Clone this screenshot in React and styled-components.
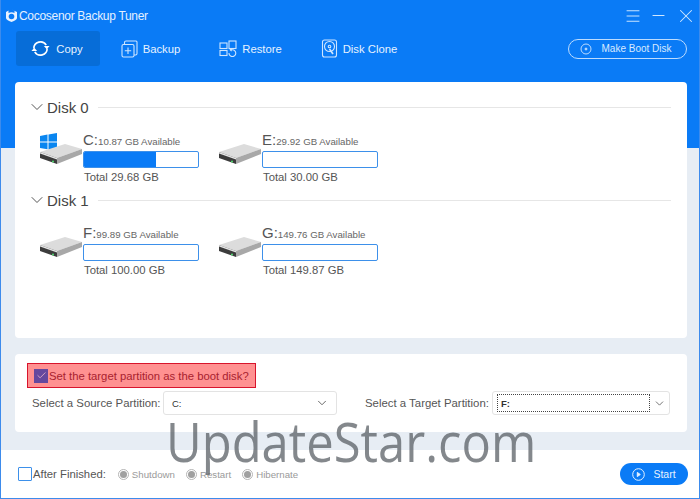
import React from "react";
import styled, { createGlobalStyle } from "styled-components";
import { ChevronDown, Menu, Minus, X, Check } from "lucide-react";

const Global = createGlobalStyle`
  html, body { margin: 0; padding: 0; background: #fff; }
  body { font-family: "Liberation Sans", Arial, sans-serif; }
`;

const Win = styled.div`
  position: relative;
  width: 700px;
  height: 499px;
  box-sizing: border-box;
  border: 1px solid #3d8bec;
  border-top: none;
  display: flex;
  flex-direction: column;
  overflow: hidden;
`;

const Header = styled.div`
  height: 70px;
  background: #0a7bf6;
  flex: none;
  display: flex;
  flex-direction: column;
`;

const TitleBar = styled.div`
  height: 31px;
  display: flex;
  align-items: center;
  padding: 0 2px 0 4px;
  font-size: 12px;
  letter-spacing: -0.3px;
  color: #e4f0ff;
  gap: 1px;
`;

const Title = styled.span`
  flex: 1;
`;

const WinBtns = styled.div`
  display: flex;
  align-items: center;
  gap: 7px;
  color: #cfe7ff;
`;

const Nav = styled.div`
  height: 35px;
  display: flex;
  align-items: center;
  padding: 0 12px 0 15px;
`;

const Tab = styled.div`
  height: 35px;
  width: ${(p) => p.$w}px;
  box-sizing: border-box;
  padding-right: 3px;
  display: flex;
  align-items: center;
  justify-content: center;
  gap: 5px;
  font-size: 11.3px;
  border-radius: 3px;
  background: ${(p) => (p.$active ? "#076dd8" : "transparent")};
  color: #e6f2ff;
`;

const BootBtn = styled.div`
  margin-left: auto;
  width: 119px;
  height: 20px;
  box-sizing: border-box;
  border: 1px solid #bcdcff;
  border-radius: 11px;
  padding-right: 3px;
  display: flex;
  align-items: center;
  justify-content: center;
  gap: 9px;
  font-size: 10px;
  color: #d8eaff;
`;

const Body = styled.div`
  flex: 1;
  background: linear-gradient(#0a7bf6 0 78px, #e7edf4 78px);
  padding: 12px 12px 17px 14px;
  display: flex;
  flex-direction: column;
  gap: 16px;
`;

const DiskPanel = styled.div`
  height: 256px;
  box-sizing: border-box;
  background: #fff;
  border-radius: 4px;
  padding: 15px 16px 0 16px;
`;

const DiskHead = styled.div`
  display: flex;
  align-items: center;
  height: 20px;
  margin-left: -4px;
  font-size: 15px;
  color: #444;
  margin-bottom: 15px;
`;

const Line = styled.div`
  flex: 1;
  height: 1px;
  background: #e6e6e6;
  margin-left: 9px;
`;

const DriveRow = styled.div`
  display: flex;
  gap: 19px;
  margin-bottom: 6px;
  padding-left: 8px;
`;

const Drive = styled.div`
  display: flex;
  width: 160px;
  align-items: flex-end;
`;

const DriveIcon = styled.div`
  position: relative;
  width: 44px;
  height: 32px;
  flex: none;
  margin-bottom: 19px;
`;

const WinLogo = styled.svg`
  position: absolute;
  left: 1px;
  top: 0;
`;

const DriveInfo = styled.div`
  width: 116px;
`;

const Label = styled.div`
  height: 15px;
  line-height: 15px;
  font-size: 9.7px;
  color: #666;
  white-space: nowrap;
  b {
    font-weight: normal;
    font-size: 15px;
    color: #555;
  }
`;

const Bar = styled.div`
  height: 17px;
  box-sizing: border-box;
  border: 1px solid #3d90ea;
  border-radius: 2px;
  margin: 4px 0 3px;
  overflow: hidden;
`;

const Fill = styled.div`
  height: 100%;
  background: #0a7bf6;
`;

const Total = styled.div`
  font-size: 11.3px;
  line-height: 13px;
  color: #555;
  padding-left: 1px;
`;

const BootPanel = styled.div`
  height: 78px;
  box-sizing: border-box;
  background: #fff;
  border-radius: 4px;
  padding: 9px 12px 0 12px;
`;

const Warn = styled.div`
  width: 229px;
  height: 25px;
  box-sizing: border-box;
  background: #ff9191;
  border: 1px solid #d8142c;
  display: flex;
  align-items: center;
  padding-left: 6px;
  gap: 1px;
  font-size: 11.3px;
  color: #a8222f;
  white-space: nowrap;
`;

const Tick = styled.div`
  width: 14px;
  height: 14px;
  flex: none;
  background: #65489e;
  display: flex;
  align-items: center;
  justify-content: center;
  color: #ffc6d0;
`;

const Selects = styled.div`
  display: flex;
  align-items: center;
  margin-top: 3px;
`;

const SelectLabel = styled.div`
  font-size: 11.4px;
  color: #555;
  padding-left: ${(p) => p.$pad}px;
  width: ${(p) => p.$w}px;
  box-sizing: border-box;
  white-space: nowrap;
`;

const Select = styled.div`
  width: ${(p) => p.$w}px;
  height: 24px;
  box-sizing: border-box;
  border: 1px solid #e3e3e3;
  border-radius: 3px;
  display: flex;
  align-items: center;
  font-size: 9.5px;
  color: #333;
  padding: ${(p) => (p.$focus ? "2px 0 2px 4px" : "0 7px 0 8px")};
  justify-content: space-between;
`;

const Focus = styled.div`
  flex: 1;
  height: 100%;
  box-sizing: border-box;
  border: 1px dotted #444;
  display: flex;
  align-items: center;
  padding-left: 3px;
  font-weight: bold;
`;

const ChevWrap = styled.div`
  display: flex;
  align-items: center;
  color: #555;
  padding: ${(p) => (p.$focus ? "0 3px" : "0")};
`;

const Footer = styled.div`
  height: 48px;
  flex: none;
  display: flex;
  align-items: center;
  padding: 0 11px 0 17px;
  font-size: 11.3px;
  color: #555;
`;

const Box = styled.div`
  width: 14px;
  height: 14px;
  box-sizing: border-box;
  border: 1px solid #3d90ea;
  border-radius: 1px;
  margin-right: 1px;
`;

const Radio = styled.div`
  width: 11px;
  height: 11px;
  box-sizing: border-box;
  border: 1px solid #b5b5b5;
  border-radius: 50%;
  background: #fff;
  margin-right: 3px;
  display: flex;
  align-items: center;
  justify-content: center;
  &::after {
    content: "";
    width: 7px;
    height: 7px;
    border-radius: 50%;
    background: #a0a0a0;
  }
`;

const RadioText = styled.span`
  font-size: 9.7px;
  color: #9a9a9a;
  margin-right: 11px;
`;

const FinishLabel = styled.span`
  margin-right: 12px;
`;

const StartBtn = styled.div`
  margin-left: auto;
  width: 68px;
  height: 22px;
  border-radius: 11px;
  background: #0a7bf6;
  color: #e6f2ff;
  display: flex;
  align-items: center;
  justify-content: center;
  gap: 8px;
  font-size: 10.5px;
`;

const Watermark = styled.div`
  position: absolute;
  left: 165px;
  top: 406px;
  font-family: "Open Sans", sans-serif;
  font-size: 55px;
  line-height: 70px;
  color: rgba(85, 90, 95, 0.72);
  white-space: nowrap;
  transform: scaleX(0.89);
  transform-origin: left top;
`;

const HddIcon = () => (
  <svg width="44" height="22" viewBox="0 0 44 22" style={{ position: "absolute", left: 0, bottom: 0 }}>
    <polygon points="1,9 26,1 43,6 18,15" fill="#dcdcdc" />
    <polygon points="18,15 43,6 43,11 18,21" fill="#a8a8a8" />
    <polygon points="1,9 18,15 18,21 1,15" fill="#3c3c3c" />
    <polygon points="1,9 18,15 18,16.4 1,10.4" fill="#e6e6e6" />
    <circle cx="14" cy="18.4" r="1" fill="#4fdc70" />
  </svg>
);

const Drv = ({ letter, avail, total, pct, sys }) => (
  <Drive>
    <DriveIcon>
      {sys && (
        <WinLogo width="17" height="18" viewBox="0 0 17 18">
          <polygon points="0,3 7.5,1.6 7.5,8.4 0,8.4" fill="#0a86f0" />
          <polygon points="8.5,1.4 17,0 17,8.4 8.5,8.4" fill="#0a86f0" />
          <polygon points="0,9.4 7.5,9.4 7.5,16.2 0,15" fill="#0a86f0" />
          <polygon points="8.5,9.4 17,9.4 17,18 8.5,16.4" fill="#0a86f0" />
        </WinLogo>
      )}
      <HddIcon />
    </DriveIcon>
    <DriveInfo>
      <Label>
        <b>{letter}:</b>
        {avail} GB Available
      </Label>
      <Bar>{pct > 0 && <Fill style={{ width: `${pct}%` }} />}</Bar>
      <Total>Total {total} GB</Total>
    </DriveInfo>
  </Drive>
);

const Disk = ({ name, children }) => (
  <>
    <DiskHead>
      <ChevronDown size={20} strokeWidth={1.2} color="#555" />
      {name}
      <Line />
    </DiskHead>
    <DriveRow>{children}</DriveRow>
  </>
);

export default function App() {
  return (
    <Win>
      <Global />
      <Header>
        <TitleBar>
          <svg width="13" height="13" viewBox="0 0 13 13">
            <path d="M6.5 0.5 L12 3 V9 Q12 11 6.5 13 Q1 11 1 9 V3 L3.5 1.6 V4 Q6.5 2.4 9.5 4 V1.8 Z" fill="#e8f2ff" />
            <circle cx="6.5" cy="7.5" r="2.8" fill="#0a7bf6" />
          </svg>
          <Title>Cocosenor Backup Tuner</Title>
          <WinBtns>
            <Menu size={18} strokeWidth={1.3} />
            <Minus size={19} strokeWidth={1.3} />
            <X size={22} strokeWidth={1.1} />
          </WinBtns>
        </TitleBar>
        <Nav>
          <Tab $active $w={84}>
            <svg width="21" height="21" viewBox="0 0 22 22" fill="none" stroke="#fff" strokeWidth="1.7">
              <path d="M4 11a7 7 0 0 1 13-3.5" />
              <path d="M18 11a7 7 0 0 1-13 3.5" />
              <path d="M14.5 8.5h6l-3 3.2z" fill="#fff" stroke="none" />
              <path d="M1.5 13.5h6l-3-3.2z" fill="#fff" stroke="none" />
            </svg>
            Copy
          </Tab>
          <Tab $w={104}>
            <svg width="17" height="18" viewBox="0 0 17 18" fill="none" stroke="#cfe6ff" strokeWidth="1.1">
              <rect x="1" y="4.5" width="12" height="12.5" rx="1.5" />
              <path d="M3.5 4.5V2.5a1.5 1.5 0 0 1 1.5-1.5h10a1 1 0 0 1 1 1v11.5a1.5 1.5 0 0 1-1.5 1.5H13" />
              <path d="M7 7.5v6.5M3.8 10.8h6.4" />
            </svg>
            Backup
          </Tab>
          <Tab $w={96}>
            <svg width="18" height="17" viewBox="0 0 18 17" fill="none" stroke="#cfe6ff" strokeWidth="1.1">
              <rect x="1" y="3" width="7" height="5.5" />
              <rect x="10" y="1" width="7" height="7.5" />
              <rect x="1" y="10.5" width="7" height="5" />
              <path d="M10 13a3.4 3.4 0 1 0 3.4-3.2H11.2M12.6 8.6l-1.4 1.2 1.4 1.3" />
            </svg>
            Restore
          </Tab>
          <Tab $w={121}>
            <svg width="17" height="19" viewBox="0 0 17 19" fill="none" stroke="#cfe6ff" strokeWidth="1.1">
              <rect x="1.5" y="1" width="14" height="17" rx="2" />
              <circle cx="8.5" cy="7.5" r="5" />
              <circle cx="8.5" cy="7.5" r="1.3" />
              <path d="M8.5 10l3.5 5" strokeWidth="1.7" />
            </svg>
            Disk Clone
          </Tab>
          <BootBtn>
            <svg width="12" height="12" viewBox="0 0 12 12" fill="none" stroke="#bcdcff">
              <circle cx="6" cy="6" r="5" />
              <circle cx="6" cy="6" r="1" fill="#bcdcff" />
            </svg>
            Make Boot Disk
          </BootBtn>
        </Nav>
      </Header>
      <Body>
        <DiskPanel>
          <Disk name="Disk 0">
            <Drv sys letter="C" avail="10.87" total="29.68" pct={63} />
            <Drv letter="E" avail="29.92" total="30.00" pct={0} />
          </Disk>
          <Disk name="Disk 1">
            <Drv letter="F" avail="99.89" total="100.00" pct={0} />
            <Drv letter="G" avail="149.76" total="149.87" pct={0} />
          </Disk>
        </DiskPanel>
        <BootPanel>
          <Warn>
            <Tick>
              <Check size={11} strokeWidth={1.5} />
            </Tick>
            Set the target partition as the boot disk?
          </Warn>
          <Selects>
            <SelectLabel $pad={5} $w={136}>Select a Source Partition:</SelectLabel>
            <Select $w={174}>
              C:
              <ChevWrap><ChevronDown size={14} strokeWidth={1.5} /></ChevWrap>
            </Select>
            <SelectLabel $pad={28} $w={155}>Select a Target Partition:</SelectLabel>
            <Select $w={178} $focus>
              <Focus>F:</Focus>
              <ChevWrap $focus><ChevronDown size={13} strokeWidth={1.5} /></ChevWrap>
            </Select>
          </Selects>
        </BootPanel>
      </Body>
      <Footer>
        <Box />
        <FinishLabel>After Finished:</FinishLabel>
        <Radio /><RadioText>Shutdown</RadioText>
        <Radio /><RadioText>Restart</RadioText>
        <Radio /><RadioText>Hibernate</RadioText>
        <StartBtn>
          <svg width="13" height="13" viewBox="0 0 13 13" fill="none" stroke="#e6f2ff">
            <circle cx="6.5" cy="6.5" r="5.8" />
            <path d="M5.3 4.4l3 2.1-3 2.1z" fill="#e6f2ff" />
          </svg>
          Start
        </StartBtn>
      </Footer>
      <Watermark>UpdateStar.com</Watermark>
    </Win>
  );
}
